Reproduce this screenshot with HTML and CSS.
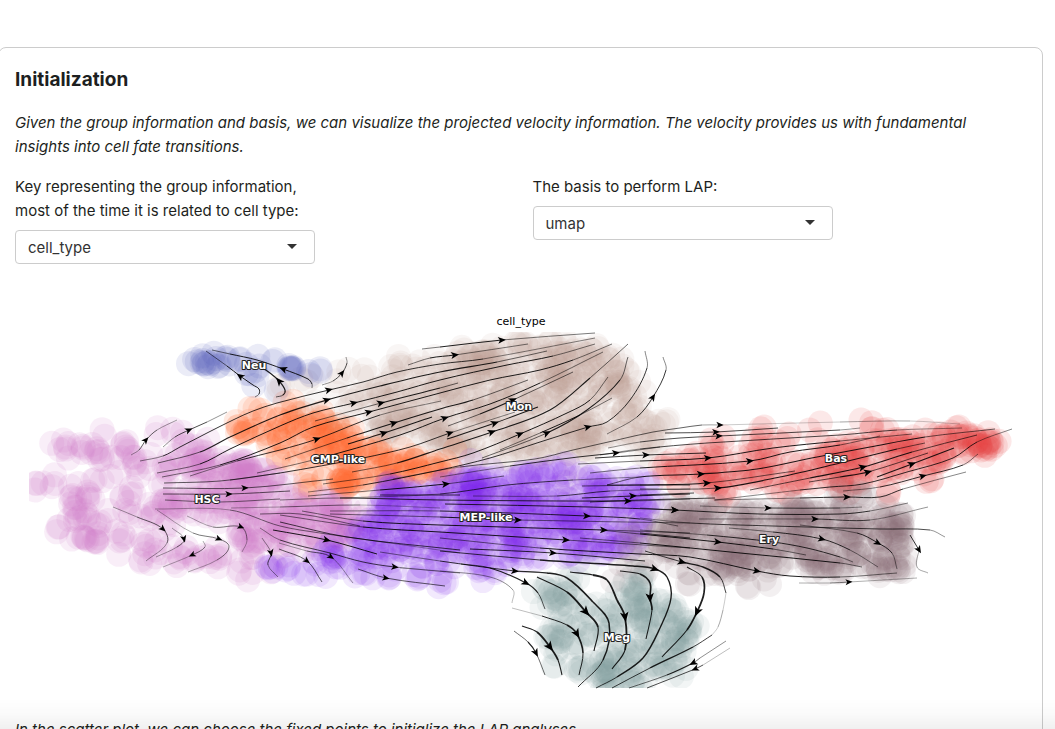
FILE: index.html
```html
<!DOCTYPE html>
<html lang="en">
<head>
<meta charset="utf-8">
<meta name="viewport" content="width=device-width, initial-scale=1">
<title>Initialization</title>
<link rel="stylesheet" href="styles.css">
</head>
<body>
<main class="card">
  <h1 class="card-title">Initialization</h1>
  <p class="lead">Given the group information and basis, we can visualize the projected velocity information. The velocity provides us with fundamental insights into cell fate transitions.</p>
  <form class="fields">
    <div class="field">
      <label for="group-key">Key representing the group information, most of the time it is related to cell type:</label>
      <div class="select-wrap">
        <select id="group-key"><option>cell_type</option></select>
      </div>
    </div>
    <div class="field">
      <label for="basis">The basis to perform LAP:</label>
      <div class="select-wrap">
        <select id="basis"><option>umap</option></select>
      </div>
    </div>
  </form>
  <svg class="plot" viewBox="15 310 1011 380" role="img" aria-label="Streamline plot of cell types">
    <defs>
      <clipPath id="frame"><rect x="29" y="332" width="983" height="356"/></clipPath>
    </defs>
    <text class="plot-title" x="521" y="325">cell_type</text>
    <g id="cells" clip-path="url(#frame)"></g>
    <g id="streams"></g>
    <g class="plot-labels">
      <text x="254" y="369">Neu</text>
      <text x="519" y="410">Mon</text>
      <text x="338" y="463">GMP-like</text>
      <text x="207" y="503">HSC</text>
      <text x="486" y="521">MEP-like</text>
      <text x="836" y="462">Bas</text>
      <text x="769" y="543">Ery</text>
      <text x="617" y="641">Meg</text>
    </g>
  </svg>
  <p class="lead">In the scatter plot, we can choose the fixed points to initialize the LAP analyses.</p>
</main>
<script src="plot.js"></script>
</body>
</html>
```

FILE: styles.css
```css
* {
  box-sizing: border-box;
}

body {
  margin: 0;
  height: 100vh;
  overflow: hidden;
  background: #fff;
  color: #1d1f21;
  font: 400 16px/24px Inter, "Liberation Sans", sans-serif;
}

body::after {
  content: "";
  position: fixed;
  inset: auto 0 0;
  height: 30px;
  background: linear-gradient(rgba(0, 0, 0, 0), rgba(0, 0, 0, 0.02) 50%, rgba(0, 0, 0, 0.06));
  pointer-events: none;
}

.card {
  margin: 47px 12px 0 -2px;
  padding: 17px 16px 16px;
  border: 1px solid #ccc;
  border-radius: 8px;
}

.card-title {
  margin: 0 0 16px;
  font-size: 19px;
  line-height: 30px;
  font-weight: 700;
}

.lead {
  margin: 0 0 16px;
  padding-right: 16px;
  font-size: 15px;
  font-style: italic;
}

.fields {
  display: grid;
  grid-template-columns: 1fr 1fr;
  gap: 24px;
  align-items: start;
}

.field {
  display: grid;
  gap: 7px;
  width: 300px;
  font-size: 15px;
}

.select-wrap {
  position: relative;
}

.select-wrap::after {
  content: "";
  position: absolute;
  top: 14px;
  right: 18px;
  border: 5px solid transparent;
  border-top-color: #333;
  border-bottom: 0;
  pointer-events: none;
}

select {
  display: block;
  width: 100%;
  height: 34px;
  padding: 2px 12px 0;
  border: 1px solid #ccc;
  border-radius: 4px;
  appearance: none;
  background: #fff;
  color: #333;
  font: inherit;
}

.plot {
  display: block;
  width: 100%;
  margin: 46px 0 28px;
}

.plot-title {
  font: 11px "DejaVu Sans", sans-serif;
  text-anchor: middle;
  fill: #000;
}

.plot-labels text {
  font: bold 11px "DejaVu Sans", sans-serif;
  text-anchor: middle;
  fill: #fff;
  stroke: #222;
  stroke-width: 2px;
  stroke-linejoin: round;
  paint-order: stroke;
}

.stream {
  fill: none;
  stroke: #000;
  stroke-opacity: 0.88;
}
```

FILE: plot.js
```js
let seed = 7;
const rand = () => {
  seed = (seed * 1664525 + 1013904223) >>> 0;
  return seed / 4294967296;
};
const gauss = () => (rand() + rand() + rand() + rand() - 2) * 1.5;

// area: polygon of cell centres with a count; spots: [x, y, spread, count]
const groups = [
  { color: "#b99a8c", a: 0.09, n: 400,
    area: [[360,420],[390,365],[450,352],[500,342],[540,338],[605,345],[630,368],[655,400],[640,420],[668,428],[655,440],[600,450],[540,462],[480,462],[420,448],[370,430]],
    spots: [[480,362,12,14],[560,360,12,16],[560,385,12,14],[500,395,14,10],[380,395,10,8],[395,420,12,12],[450,440,14,12],[610,365,12,10],[620,390,10,6],[585,440,20,20],[640,435,12,14],[665,420,5,4],[280,395,6,3],[320,392,14,6],[345,370,5,2],[350,400,12,7],[365,372,5,3],[400,362,4,3]] },
  { color: "#ff6a30", a: 0.14, n: 115,
    area: [[232,430],[250,415],[300,410],[340,425],[360,440],[410,448],[450,462],[430,475],[370,488],[320,488],[290,470],[260,445]],
    spots: [[240,428,6,8],[315,425,9,8],[320,440,8,7],[345,482,7,15],[440,466,7,10],[415,464,8,7],[385,462,7,6],[275,440,8,6],[308,482,6,6],[255,410,5,3],[290,412,8,5],[340,430,9,6]] },
  { color: "#cd7cc8", a: 0.13, n: 180,
    area: [[160,460],[200,435],[225,445],[270,470],[300,490],[340,500],[370,510],[350,540],[300,550],[250,545],[210,520],[160,510]],
    spots: [[200,455,8,9],[245,470,8,15],[250,500,10,15],[205,490,12,11],[165,507,9,10],[250,535,10,9],[285,540,12,7],[210,555,8,9],[190,550,7,6],[235,560,12,8],[270,562,10,4],[140,462,9,10],[127,445,5,6],[180,435,6,4],[66,445,5,6],[80,450,6,4],[98,453,7,7],[104,437,4,2],[48,442,3,1],[40,487,5,4],[54,485,4,3],[72,492,6,5],[82,500,7,8],[70,512,6,5],[85,518,6,6],[66,533,6,4],[86,540,6,8],[98,535,6,5],[100,515,6,3],[95,480,6,3],[128,498,8,6],[135,512,8,5],[150,515,6,4],[120,540,7,6],[140,547,8,7],[156,558,5,4],[175,560,6,3],[160,535,8,4],[110,470,10,4],[300,515,15,12],[340,520,14,13],[155,430,4,2]] },
  { color: "#842ce8", a: 0.1, n: 390,
    area: [[385,490],[440,480],[470,468],[500,475],[560,465],[600,480],[650,475],[662,505],[640,545],[580,560],[530,560],[490,572],[430,572],[370,565],[310,560],[340,535],[370,515]],
    spots: [[395,490,9,14],[392,510,8,8],[480,487,12,26],[470,500,10,10],[525,490,10,17],[520,515,10,10],[565,516,9,18],[515,536,9,15],[455,525,10,12],[455,545,9,8],[400,545,12,10],[580,550,9,7],[615,530,9,7],[640,492,9,12],[600,490,8,7],[272,567,4,5],[290,567,5,4],[310,570,7,6],[330,560,8,9],[360,572,7,6],[390,575,7,5],[420,576,6,4],[450,574,9,8],[490,570,8,6],[560,465,7,4],[420,500,9,7]] },
  { color: "#e34545", a: 0.12, n: 130,
    area: [[655,465],[700,450],[750,450],[800,455],[850,440],[900,435],[960,437],[990,440],[985,450],[930,465],[880,480],[840,487],[790,485],[740,485],[700,480]],
    spots: [[675,470,8,11],[708,472,8,17],[722,488,7,9],[710,450,7,5],[720,438,5,3],[752,445,5,4],[762,428,4,3],[765,455,8,7],[765,475,8,6],[785,440,7,4],[812,432,5,3],[870,430,7,8],[855,450,8,8],[900,440,8,6],[910,448,8,10],[975,440,6,8],[985,443,7,13],[960,436,6,6],[995,441,4,4],[940,433,6,6],[938,455,7,6],[925,475,6,4],[885,492,6,3],[845,487,7,5],[785,497,8,3]] },
  { color: "#8b6d72", a: 0.1, n: 250,
    area: [[665,515],[695,498],[720,505],[770,508],[830,505],[880,515],[905,520],[908,540],[905,570],[870,570],[820,575],[770,570],[720,570],[690,560],[650,545]],
    spots: [[685,525,9,9],[705,515,8,6],[725,555,10,14],[745,525,10,10],[770,545,10,10],[740,560,10,8],[800,530,10,7],[835,520,9,7],[845,545,8,6],[815,565,10,7],[895,525,7,14],[885,535,8,7],[895,568,6,10],[870,565,8,5],[860,500,6,5],[840,500,7,5],[790,508,8,5],[685,578,8,5],[715,570,8,6],[749,587,2,2],[770,575,8,5],[640,540,12,10],[640,565,12,10],[675,510,10,10],[885,510,6,4]] },
  { color: "#7d9b9c", a: 0.1, n: 130,
    area: [[540,580],[575,578],[600,590],[635,580],[670,600],[690,625],[685,655],[670,670],[640,680],[590,682],[570,665],[545,640],[545,610]],
    spots: [[560,590,9,7],[545,592,7,4],[560,640,9,8],[560,655,7,4],[585,615,9,5],[635,605,10,11],[640,620,10,8],[615,655,9,8],[605,680,9,14],[640,680,9,7],[670,660,9,9],[680,635,8,8],[675,605,7,6],[640,580,7,7],[695,628,5,3],[678,670,5,3],[575,570,8,3]] },
  { color: "#5a64bc", a: 0.12, n: 0,
    area: [[0,0],[1,0],[1,1]],
    spots: [[195,362,3,3],[204,361,3,6],[213,361,3,5],[223,362,4,3],[230,360,4,2],[242,362,5,3],[255,372,5,4],[252,384,3,1],[262,365,5,2],[275,364,5,2],[292,366,3,6],[289,370,3,2],[312,371,2,2],[322,370,3,2],[276,390,2,1],[230,358,5,1]] },
];

const inside = (x, y, poly) => {
  let hit = false;
  for (let i = 0, j = poly.length - 1; i < poly.length; j = i++) {
    const [xi, yi] = poly[i], [xj, yj] = poly[j];
    if ((yi > y) !== (yj > y) && x < ((xj - xi) * (y - yi)) / (yj - yi) + xi) hit = !hit;
  }
  return hit;
};

let dots = "";
for (const g of groups) {
  const xs = g.area.map(p => p[0]), ys = g.area.map(p => p[1]);
  const x0 = Math.min(...xs), y0 = Math.min(...ys);
  const w = Math.max(...xs) - x0, h = Math.max(...ys) - y0;
  const pts = [];
  while (pts.length < g.n) {
    const x = x0 + rand() * w, y = y0 + rand() * h;
    if (inside(x, y, g.area)) pts.push([x, y]);
  }
  for (const [x, y, s, n] of g.spots)
    for (let i = 0; i < n; i++) pts.push([x + gauss() * s, y + gauss() * s]);
  dots += `<g fill="${g.color}" fill-opacity="${g.a}">` +
    pts.map(([x, y]) => `<circle cx="${x.toFixed(1)}" cy="${y.toFixed(1)}" r="12.5"/>`).join("") + "</g>";
}
document.getElementById("cells").innerHTML = dots;

// Each stream: width, then points in flow order; ">" marks the arrow head.
const streams = `
1 255,397 259,394 259,389 253,385 >240,376 227,366 206,351
1.2 276,397 283,395 285,390 >279,381 270,373 262,368 246,362
1 312,388 312,384 308,379 >283,369 257,360 230,354 212,350
.8 322,385 333,381 >342,373 347,363 346,357
.7 131,455 139,450 >146,440 157,430 177,420
.8 163,447 175,437 >189,430 207,422 227,412
.9 140,461 163,456 180,447 207,433 233,420 253,411 277,403 >329,390 363,382 397,372 440,364 483,359 595,338
1.1 158,463 200,452 230,437 280,415 >327,400 380,386 440,372 497,362 547,351
1 157,473 200,464 230,449 280,426 313,413 >354,403 397,392 440,380 507,365 553,356 595,344
1 162,477 220,465 280,443 313,427 >369,412 440,393 490,380 540,370 573,360 612,344
1.1 315,421 >381,403 440,388 458,383
.9 190,476 237,461 280,450 >317,439 380,415 441,401
1.1 285,459 347,438 >394,423 440,409 473,400 528,380
1.1 348,444 >384,433 432,417
1 257,473 313,460 400,435 >445,418 490,404 540,383 603,352
.9 230,480 280,473 363,458 410,447 >450,433 515,412
1.1 448,426 480,414 >513,400 573,372
1.1 447,439 >495,423 538,407
1.1 352,472 397,463 440,449 >492,432 550,410 590,378 628,344
1 323,484 390,474 440,462 473,453 >520,434 567,413 590,400 608,377
1.1 482,458 >547,433 587,410 620,380 628,357
.9 308,492 363,485 440,470 490,458 540,442 >588,427 607,422 630,400 647,368 645,351
1 500,450 540,433 580,415 612,398
.9 607,434 637,417 >653,397 666,370 663,357
1 422,349 440,347 >502,340 595,333
1 408,365 430,358 >455,355 528,344
.7 393,479 460,467 535,459 573,450 617,440 653,432 680,428 702,425 >720,425
.4 720,425 840,422 910,421 960,424
.8 608,448 640,442 680,438 >719,436 840,430 860,428
.8 665,433 >716,432 778,428
.8 600,455 640,449 707,443 840,435 897,430 962,428
.9 595,458 >646,455 706,453
.9 440,477 510,466 578,457 >616,453 660,447
1 578,464 640,461 >708,458 773,448 840,441 912,434
1 590,473 640,468 >750,461 790,452 840,445 880,436
1.1 607,485 640,477 >701,474 757,469 817,457 870,447 925,437 995,429
1.1 582,486 640,485 >707,483 795,471
1.1 640,489 >718,488 780,477 840,463 897,449 925,443
1.2 750,490 810,478 >863,467 912,452 977,435
1.2 809,482 840,477 >868,472 928,453
1.1 877,477 >912,464 954,448
.9 715,500 800,490 830,487 863,484 907,472 953,458 977,442 1012,429
.9 843,491 880,487 >923,476 963,465 978,454
.9 714,500 800,498 >847,497 880,497 903,489 966,472
.8 640,495 694,493
.8 590,502 640,500 715,498
.8 700,506 >768,508 840,508 862,507
.9 640,508 >675,510 760,514 840,514 870,511 908,503
.8 699,519 >815,519 870,520 928,507
.8 640,518 690,523 773,526 840,528 880,529 930,530 945,537
.9 800,525 857,533 >878,543 892,553 897,569
.9 729,528 773,532 >822,539 850,550 878,567
.9 640,530 707,535 773,542 807,548 840,557 853,562
1 600,530 640,534 >718,542 773,549 806,555
1 580,538 640,543 740,553 840,563 862,567
1 440,538 540,548 640,554 690,557 >757,571 790,576 840,577 897,573
.6 799,583 830,583 >849,582 917,578
.9 910,535 >919,550
.4 919,550 917,567 928,573
1.4 645,551 >682,562 703,567 720,577 726,593
.4 726,593 723,610 718,627 712,635
1.4 712,635 693,647 650,668 612,688
1.4 440,551 540,560 633,566 >655,569 667,577 671,598 660,628 643,658 617,677 596,688
1.7 620,571 640,574 650,583 >650,598 652,610 646,639
1.7 687,567 702,577 704,593 >697,612 687,630 662,657
.5 726,641 700,658
1.1 700,658 >693,663 667,675 629,688
.3 730,648 703,665
.8 703,665 >695,669 647,688
1.8 570,572 593,575 607,580 617,600 >625,617 625,650 612,669
1.9 537,577 567,592 >586,612 598,627 594,651
1.5 515,571 547,573 567,578 593,602 609,623 603,660 578,687
.9 380,552 440,561 >515,571 547,573
1.2 461,564 490,568 >526,583 538,593 545,609
.5 400,568 440,571 490,577 513,590 512,603
.3 512,608 542,616
1.6 542,616 567,625 >577,634 583,653 579,675
1.8 522,626 537,632 >550,647 558,660 562,675
1.1 514,631 528,642 >536,653 545,675
1 308,496 380,490 >446,484 504,476
.8 340,498 440,494 507,485 573,480 640,477
.8 473,496 557,496 610,491 690,489
.8 607,485 690,485
.9 582,498 >633,496 690,494
.9 280,500 340,498 440,500 >628,501 690,499
.9 445,504 590,507 >675,510
.9 330,511 440,511 >587,516 640,519 678,526
1 330,514 440,517 >518,520 690,523
1 302,511 363,521 440,525 >604,530 690,533
1 280,515 363,527 440,532 >566,540 690,548
.9 470,549 >553,553 645,561
.8 640,533 690,538
.7 164,483 220,481 280,473
.7 163,488 >245,488 333,479
.7 163,494 >229,494 290,491
.6 165,500 220,502 280,499
.6 155,509 230,510 280,526 320,533 390,543 460,553
.6 231,508 280,507 360,505 440,508
.6 260,514 300,514 360,526
.6 157,510 193,533 >219,539 229,547 217,560 188,572
.7 113,507 137,517 >163,529 167,543 146,561
.7 172,528 >184,539 177,547 156,557
.6 203,541 205,547 >192,555 163,567
.6 187,516 213,527 >241,527 247,540 242,552
.8 262,538 >271,553 268,565 278,577
.7 279,549 >307,561 322,582
.7 279,543 307,551 >331,557 353,583
1 273,530 >327,540 377,554
.8 260,528 280,540 330,553 363,562 >395,567 460,573
.7 358,569 >386,578 445,586
.8 280,522 347,537 460,550
.8 380,495 460,495`;

let marks = "";
for (const line of streams.trim().split("\n")) {
  const [width, ...raw] = line.split(" ");
  const head = raw.findIndex(p => p[0] === ">");
  const p = raw.map(s => s.replace(">", "").split(",").map(Number));
  const at = i => p[Math.max(0, Math.min(p.length - 1, i))];
  for (let i = 0; i < p.length - 1; i++) {
    const [a, b, c, d] = [at(i - 1), at(i), at(i + 1), at(i + 2)];
    // handles follow the length of this span, so uneven spacing stays smooth
    const len = Math.hypot(c[0] - b[0], c[1] - b[1]) / 3;
    const n1 = Math.hypot(c[0] - a[0], c[1] - a[1]) || 1;
    const n2 = Math.hypot(d[0] - b[0], d[1] - b[1]) || 1;
    const h1 = [b[0] + ((c[0] - a[0]) / n1) * len, b[1] + ((c[1] - a[1]) / n1) * len];
    const h2 = [c[0] - ((d[0] - b[0]) / n2) * len, c[1] - ((d[1] - b[1]) / n2) * len];
    const end = p.length > 3 && (i === 0 || i === p.length - 2);
    const w = width * (end ? 0.6 : 1);
    const f = v => v.map(n => n.toFixed(1)).join(",");
    marks += `<path class="stream" stroke-width="${w.toFixed(2)}" d="M${f(b)} C${f(h1)} ${f(h2)} ${f(c)}"/>`;
  }
  if (head >= 0) {
    const b = at(head - 1), c = at(head + 1), [x, y] = p[head];
    const angle = (Math.atan2(c[1] - b[1], c[0] - b[0]) * 180) / Math.PI;
    const k = Math.min(1.25, 0.7 + width * 0.3);
    marks += `<path d="M4,0 L-4,-3.5 L-2,0 L-4,3.5Z" transform="translate(${x} ${y}) rotate(${angle.toFixed(1)}) scale(${k.toFixed(2)})"/>`;
  }
}
document.getElementById("streams").innerHTML = marks;
```
